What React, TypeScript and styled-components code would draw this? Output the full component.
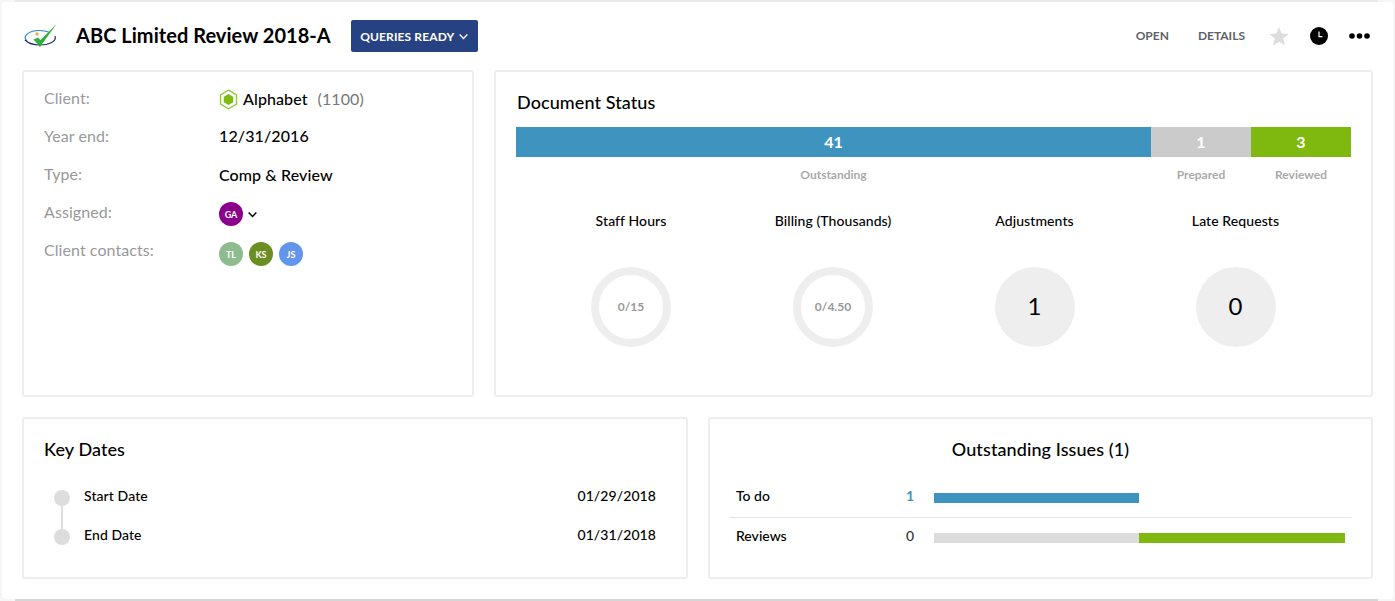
import React from "react";
import styled, { createGlobalStyle } from "styled-components";

const Global = createGlobalStyle`
  html, body { margin: 0; padding: 0; background: #f6f6f6; }
  body { font-family: Lato, "Liberation Sans", sans-serif; color: #000; }
  * { box-sizing: border-box; }
`;

const Page = styled.div`
  width: 1395px;
  height: 601px;
  padding: 2px;
  overflow: hidden;
  background:
    linear-gradient(#e9e9e9, #e9e9e9) 15px 0 / 1363px 2px no-repeat,
    linear-gradient(#d6d6d6, #d6d6d6) 15px 599px / 1363px 2px no-repeat,
    #f6f6f6;
`;
const Sheet = styled.div`
  background: #fff;
  height: 597px;
  padding: 0 20px;
  border-radius: 3px;
`;
const Header = styled.header`
  height: 68px;
  display: flex;
  align-items: center;
  padding: 0 3px 0 0;
`;
const LogoBox = styled.div`
  width: 54px;
  display: flex;
  align-items: center;
`;
const Title = styled.h1`
  margin: 0 0 3px;
  font-size: 20px;
  font-weight: 700;
  line-height: 28px;
  letter-spacing: 0.002em;
`;
const StatusButton = styled.button`
  margin-left: 20px;
  width: 127px;
  height: 32px;
  border: 0;
  border-radius: 2px;
  background: #264282;
  color: #fff;
  font: 700 12px Lato, sans-serif;
  letter-spacing: 0.01em;
  display: flex;
  align-items: center;
  justify-content: center;
  gap: 4px;
  padding: 0 0 0 1px;
`;
const HeaderActions = styled.div`
  margin-left: auto;
  display: flex;
  align-items: center;
`;
const ActionLink = styled.span<{ $gap: number }>`
  font-size: 12px;
  font-weight: 700;
  color: #5f6368;
  margin: 0 ${(p) => p.$gap}px 2px 0;
`;
const IconSlot = styled.span<{ $gap: number }>`
  display: flex;
  margin-right: ${(p) => p.$gap}px;
`;
const Row = styled.div<{ $columns: string }>`
  display: grid;
  grid-template-columns: ${(p) => p.$columns};
  gap: 20px;
`;
const Card = styled.section<{ $height: number }>`
  height: ${(p) => p.$height}px;
  border: 2px solid #eee;
  border-radius: 3px;
  background: #fff;
`;
const InfoCard = styled(Card)`
  padding: 10px 20px 0;
`;
const InfoRow = styled.div`
  display: grid;
  grid-template-columns: 175px 1fr;
  height: 38px;
  align-items: flex-start;
  padding-top: 4px;
`;
const InfoLabel = styled.span`
  font-size: 16px;
  line-height: 24px;
  color: #999;
  letter-spacing: 0.004em;
`;
const InfoValue = styled.span<{ $lift?: number }>`
  font-size: 16px;
  line-height: 24px;
  font-weight: 500;
  letter-spacing: 0.006em;
  display: flex;
  align-items: center;
  margin-top: ${(p) => 1 - (p.$lift ?? 0)}px;
`;
const Code = styled.span`
  margin-left: 10px;
  font-weight: 400;
  color: #777;
`;
const AvatarGroup = styled.div<{ $top: number; $gap: number }>`
  display: flex;
  align-items: center;
  gap: ${(p) => p.$gap}px;
  margin-top: ${(p) => p.$top}px;
`;
const Avatar = styled.span<{ $color: string }>`
  width: 24px;
  height: 24px;
  border-radius: 50%;
  background: ${(p) => p.$color};
  color: #fff;
  font-size: 9px;
  font-weight: 700;
  display: flex;
  align-items: center;
  justify-content: center;
`;
const StatusCard = styled(Card)`
  padding: 18px 20px 0;
`;
const CardTitle = styled.h2`
  margin: 0;
  font-size: 18px;
  font-weight: 500;
  line-height: 24px;
  letter-spacing: 0.005em;
`;
const StatusTitle = styled(CardTitle)`
  margin-left: 1px;
`;
const Bar = styled.div`
  display: flex;
  height: 30px;
  margin-top: 13px;
`;
const BarPart = styled.div<{ $color: string; $width: number }>`
  width: ${(p) => p.$width}px;
  background: ${(p) => p.$color};
  color: #fff;
  font-size: 16px;
  font-weight: 700;
  padding-bottom: 2px;
  display: flex;
  align-items: center;
  justify-content: center;
`;
const BarLabels = styled.div`
  display: flex;
  margin-top: 10px;
`;
const BarLabel = styled.div<{ $width: number }>`
  width: ${(p) => p.$width}px;
  text-align: center;
  font-size: 12px;
  font-weight: 700;
  line-height: 16px;
  color: #aaa;
`;
const Metrics = styled.div`
  display: grid;
  grid-template-columns: 202px 202px 201px 201px;
  margin-top: 28px;
  margin-left: 14px;
`;
const Metric = styled.div`
  display: flex;
  flex-direction: column;
  align-items: center;
`;
const MetricTitle = styled.div`
  font-size: 14px;
  font-weight: 500;
  line-height: 20px;
  letter-spacing: 0.006em;
  margin-bottom: 36px;
`;
const Ring = styled.div`
  width: 80px;
  height: 80px;
  border-radius: 50%;
  border: 8px solid #eee;
  padding-bottom: 1px;
  display: flex;
  align-items: center;
  justify-content: center;
  font-size: 12px;
  font-weight: 700;
  color: #999;
`;
const Disc = styled.div`
  width: 80px;
  height: 80px;
  border-radius: 50%;
  background: #eee;
  padding-bottom: 3px;
  display: flex;
  align-items: center;
  justify-content: center;
  font-size: 24px;
  font-weight: 400;
`;
const BottomRow = styled(Row)`
  margin-top: 20px;
`;
const DatesCard = styled(Card)`
  padding: 18px 30px 0 20px;
`;
const DateList = styled.div`
  margin-top: 15px;
  margin-left: 10px;
`;
const DateRow = styled.div`
  display: flex;
  align-items: center;
  height: 39px;
  font-size: 14px;
  font-weight: 500;
  letter-spacing: 0.006em;
`;
const Dot = styled.span`
  width: 16px;
  height: 16px;
  border-radius: 50%;
  background: #ddd;
  margin: 4px 14px 0 0;
  position: relative;
  &[data-link]::after {
    content: "";
    position: absolute;
    left: 7px;
    top: 16px;
    width: 2px;
    height: 24px;
    background: #ddd;
  }
`;
const DateValue = styled.span`
  margin-left: auto;
`;
const IssuesCard = styled(Card)`
  padding: 18px 20px 0;
`;
const IssuesTitle = styled(CardTitle)`
  text-align: center;
  margin-bottom: 17px;
`;
const IssueRow = styled.div<{ $divider?: boolean }>`
  display: flex;
  align-items: center;
  height: 40px;
  padding: 0 6px;
  border-bottom: ${(p) => (p.$divider ? "1px solid #e5e5e5" : "0")};
  font-size: 14px;
`;
const IssueName = styled.span<{ $lift: number }>`
  width: 165px;
  font-weight: 500;
  margin-top: -${(p) => p.$lift}px;
`;
const IssueCount = styled.span<{ $color: string; $lift: number; $weight: number }>`
  width: 13px;
  text-align: right;
  color: ${(p) => p.$color};
  font-weight: ${(p) => p.$weight};
  margin: -${(p) => p.$lift}px 20px 0 0;
`;
const IssueBar = styled.span<{ $color: string; $width: number }>`
  width: ${(p) => p.$width}px;
  height: 10px;
  background: ${(p) => p.$color};
`;

const Logo = () => (
  <svg width="36" height="24" viewBox="0 0 36 24">
    <path d="M5 17C-1 12 8 6.500 17 6.500c4 0 8 .8 11 2" fill="none" stroke="#2b86bd" strokeWidth="1.200" />
    <path d="M3 16c5 5 11 5 15 5 8 0 17-3 15-9" fill="none" stroke="#1f2d6b" strokeWidth="1.200" />
    <circle cx="15" cy="10" r="1.700" fill="#e6b04a" />
    <path d="M11.500 15.500l4.500-2 2.500 2.500L34.500 0 18 23z" fill="#2fb03c" />
  </svg>
);
const Chevron = ({ color, size }: { color: string; size: number }) => (
  <svg width={size} height={size} viewBox="0 0 10 10" fill="none">
    <path d="M1.500 3.200 5 6.800l3.500-3.600" stroke={color} strokeWidth="1.300" />
  </svg>
);
const Star = () => (
  <svg width="20" height="19" viewBox="0 0 20 19">
    <path d="M10 0l2.600 6.600 7.100.5-5.500 4.500 1.800 6.900L10 14.700l-6 3.800 1.800-6.900L.3 7.100l7.100-.5z" fill="#ddd" />
  </svg>
);
const Clock = () => (
  <svg width="18" height="18" viewBox="0 0 18 18">
    <circle cx="9" cy="9" r="9" fill="#000" />
    <path d="M9 4.500V9.600h3.400" fill="none" stroke="#fff" strokeWidth="1.200" />
  </svg>
);
const Dots = () => (
  <svg width="21" height="6" viewBox="0 0 21 6">
    <circle cx="3" cy="3" r="2.800" fill="#000" />
    <circle cx="10.500" cy="3" r="2.800" fill="#000" />
    <circle cx="18" cy="3" r="2.800" fill="#000" />
  </svg>
);
const HexMark = styled.svg`
  margin-right: 5px;
  flex: none;
`;
const Hex = () => (
  <HexMark width="19" height="21" viewBox="0 0 19 21">
    <path d="M9.500 1.200l8 4.600v9.400l-8 4.600-8-4.600V5.800z" fill="#fff" stroke="#8ccb3f" strokeWidth="1.400" />
    <path d="M9.500 5l4.700 2.700v5.600l-4.700 2.700-4.700-2.700V7.700z" fill="#7dbb12" />
  </HexMark>
);

export default function App() {
  return (
    <Page>
      <Global />
      <Sheet>
        <Header>
          <LogoBox><Logo /></LogoBox>
          <Title>ABC Limited Review 2018-A</Title>
          <StatusButton>QUERIES READY <Chevron color="#fff" size={11} /></StatusButton>
          <HeaderActions>
            <ActionLink $gap={29}>OPEN</ActionLink>
            <ActionLink $gap={24}>DETAILS</ActionLink>
            <IconSlot $gap={21}><Star /></IconSlot>
            <IconSlot $gap={21}><Clock /></IconSlot>
            <Dots />
          </HeaderActions>
        </Header>
        <Row $columns="452px 879px">
          <InfoCard $height={327}>
            <InfoRow>
              <InfoLabel>Client:</InfoLabel>
              <InfoValue><Hex />Alphabet<Code>(1100)</Code></InfoValue>
            </InfoRow>
            <InfoRow>
              <InfoLabel>Year end:</InfoLabel>
              <InfoValue $lift={1}>12/31/2016</InfoValue>
            </InfoRow>
            <InfoRow>
              <InfoLabel>Type:</InfoLabel>
              <InfoValue>Comp &amp; Review</InfoValue>
            </InfoRow>
            <InfoRow>
              <InfoLabel>Assigned:</InfoLabel>
              <AvatarGroup $top={2} $gap={4}>
                <Avatar $color="#8b008b">GA</Avatar>
                <Chevron color="#000" size={11} />
              </AvatarGroup>
            </InfoRow>
            <InfoRow>
              <InfoLabel>Client contacts:</InfoLabel>
              <AvatarGroup $top={4} $gap={6}>
                <Avatar $color="#8fbc8f">TL</Avatar>
                <Avatar $color="#6b8e23">KS</Avatar>
                <Avatar $color="#6495ed">JS</Avatar>
              </AvatarGroup>
            </InfoRow>
          </InfoCard>
          <StatusCard $height={327}>
            <StatusTitle>Document Status</StatusTitle>
            <Bar>
              <BarPart $color="#3f94bf" $width={635}>41</BarPart>
              <BarPart $color="#cbcbcb" $width={100}>1</BarPart>
              <BarPart $color="#7fb80e" $width={100}>3</BarPart>
            </Bar>
            <BarLabels>
              <BarLabel $width={635}>Outstanding</BarLabel>
              <BarLabel $width={100}>Prepared</BarLabel>
              <BarLabel $width={100}>Reviewed</BarLabel>
            </BarLabels>
            <Metrics>
              <Metric><MetricTitle>Staff Hours</MetricTitle><Ring>0/15</Ring></Metric>
              <Metric><MetricTitle>Billing (Thousands)</MetricTitle><Ring>0/4.50</Ring></Metric>
              <Metric><MetricTitle>Adjustments</MetricTitle><Disc>1</Disc></Metric>
              <Metric><MetricTitle>Late Requests</MetricTitle><Disc>0</Disc></Metric>
            </Metrics>
          </StatusCard>
        </Row>
        <BottomRow $columns="666px 665px">
          <DatesCard $height={162}>
            <CardTitle>Key Dates</CardTitle>
            <DateList>
              <DateRow><Dot data-link="" />Start Date<DateValue>01/29/2018</DateValue></DateRow>
              <DateRow><Dot />End Date<DateValue>01/31/2018</DateValue></DateRow>
            </DateList>
          </DatesCard>
          <IssuesCard $height={162}>
            <IssuesTitle>Outstanding Issues (1)</IssuesTitle>
            <IssueRow $divider>
              <IssueName $lift={4}>To do</IssueName>
              <IssueCount $color="#3f94bf" $lift={4} $weight={700}>1</IssueCount>
              <IssueBar $color="#3f94bf" $width={205} />
            </IssueRow>
            <IssueRow>
              <IssueName $lift={5}>Reviews</IssueName>
              <IssueCount $color="#333" $lift={5} $weight={500}>0</IssueCount>
              <IssueBar $color="#dcdcdc" $width={205} />
              <IssueBar $color="#7fb80e" $width={206} />
            </IssueRow>
          </IssuesCard>
        </BottomRow>
      </Sheet>
    </Page>
  );
}
